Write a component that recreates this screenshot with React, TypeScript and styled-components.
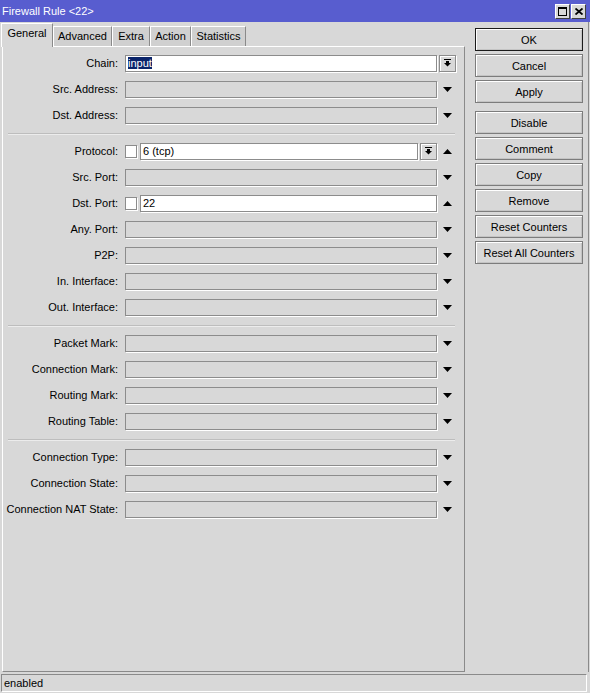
import React from 'react';
import styled, { createGlobalStyle } from 'styled-components';

const GlobalStyle = createGlobalStyle`
    html, body {
        margin: 0;
        padding: 0;
        background: #d8d8d8;
    }
    body {
        font-family: "Liberation Sans", Arial, sans-serif;
        font-size: 11px;
        color: #000;
    }
`;

const Window = styled.div`
    width: 590px;
    height: 693px;
    display: flex;
    flex-direction: column;
    background: #d8d8d8;
    box-sizing: border-box;
    overflow: hidden;
`;

const TitleBar = styled.div`
    height: 22px;
    flex: none;
    display: flex;
    align-items: center;
    justify-content: space-between;
    background: #585dcf;
    color: #fff;
    padding: 0 4px 0 2px;
    box-sizing: border-box;
`;

const TitleButtons = styled.div`
    display: flex;
    gap: 1px;
    margin-top: 1px;
`;

const TitleButton = styled.div`
    width: 15px;
    height: 15px;
    box-sizing: border-box;
    background: #d8d8d8;
    border: 1px solid;
    border-color: #fff #404040 #404040 #fff;
    display: flex;
    align-items: center;
    justify-content: center;
`;

const Main = styled.div`
    flex: 1;
    display: flex;
    padding-left: 2px;
    border-right: 1px solid #8a8a8a;
    margin-right: 1px;
    min-height: 0;
`;

const LeftColumn = styled.div`
    width: 463px;
    display: flex;
    flex-direction: column;
`;

const TabRow = styled.div`
    height: 24px;
    flex: none;
    display: flex;
    align-items: flex-end;
`;

const Tab = styled.div<{ $active?: boolean; $width: number }>`
    position: relative;
    z-index: ${p => (p.$active ? 2 : 1)};
    box-sizing: border-box;
    width: ${p => p.$width}px;
    height: ${p => (p.$active ? 24 : 20)}px;
    margin-left: ${p => (p.$active ? -1 : 0)}px;
    margin-bottom: ${p => (p.$active ? -1 : 0)}px;
    padding-top: ${p => (p.$active ? 3 : 3)}px;
    text-align: center;
    background: ${p => (p.$active ? '#d8d8d8' : '#d0d0d0')};
    border-top: 1px solid #fff;
    border-left: 1px solid #fff;
    border-right: 1px solid #8a8a8a;
    white-space: nowrap;
`;

const Panel = styled.div`
    flex: 1;
    box-sizing: border-box;
    border: 1px solid;
    border-color: #fff #8a8a8a #8a8a8a #fff;
    padding-top: 3px;
    display: flex;
    flex-direction: column;
`;

const Row = styled.div`
    height: 26px;
    display: flex;
    align-items: center;
`;

const Label = styled.div`
    width: 115px;
    margin-right: 7px;
    text-align: right;
    white-space: nowrap;
`;

const Field = styled.div`
    width: 312px;
    display: flex;
    align-items: center;
    gap: 3px;
`;

const TextBox = styled.div<{ $enabled?: boolean }>`
    flex: 1;
    height: 17px;
    box-sizing: border-box;
    border: 1px solid #8c8c8c;
    box-shadow: 1px 1px 0 #fff;
    background: ${p => (p.$enabled ? '#fff' : '#d8d8d8')};
    padding: 0 2px;
    line-height: 15px;
    white-space: nowrap;
    overflow: hidden;
`;

const Selected = styled.span`
    background: #0a246a;
    color: #fff;
`;

const CheckBox = styled.div`
    width: 12px;
    height: 13px;
    box-sizing: border-box;
    border: 1px solid #8c8c8c;
    box-shadow: 1px 1px 0 #fff;
    background: #fff;
`;

const DropButton = styled.div`
    width: 17px;
    height: 17px;
    margin-left: -1px;
    box-sizing: border-box;
    border: 1px solid #8c8c8c;
    box-shadow: inset 1px 1px 0 #fff, 1px 1px 0 #fff;
    display: flex;
    align-items: center;
    justify-content: center;
    background: #d8d8d8;
`;

const Trail = styled.div`
    width: 20px;
    display: flex;
    align-items: center;
    justify-content: center;
`;

const TrailButton = styled(Trail)`
    justify-content: flex-start;
    padding-left: 3px;
    box-sizing: border-box;
`;

const Separator = styled.div`
    height: 10px;
    display: flex;
    align-items: center;
    margin: 0 9px 0 5px;
    &::after {
        content: '';
        flex: 1;
        height: 1px;
        background: #bdbdbd;
        box-shadow: 0 1px 0 #ececec;
    }
`;

const ButtonColumn = styled.div`
    margin-left: 10px;
    padding-top: 6px;
    display: flex;
    flex-direction: column;
    gap: 3px;
`;

const Button = styled.div<{ $default?: boolean; $gapBefore?: boolean }>`
    width: 108px;
    height: 23px;
    box-sizing: border-box;
    border: 1px solid ${p => (p.$default ? '#1a1a1a' : '#7c7c7c')};
    box-shadow: inset 1px 1px 0 #fff, inset -1px -1px 0 #c4c4c4;
    display: flex;
    align-items: center;
    justify-content: center;
    margin-top: ${p => (p.$gapBefore ? 5 : 0)}px;
    white-space: nowrap;
`;

const StatusBar = styled.div`
    height: 18px;
    flex: none;
    margin: 2px 3px 1px 1px;
    box-sizing: border-box;
    border: 1px solid;
    border-color: #8a8a8a #fff #fff #8a8a8a;
    padding-left: 2px;
    line-height: 16px;
`;

const ArrowDown = () => (
    <svg width="9" height="5" viewBox="0 0 9 5">
        <polygon points="0,0 9,0 4.5,5" fill="#000" />
    </svg>
);

const ArrowUp = () => (
    <svg width="9" height="5" viewBox="0 0 9 5">
        <polygon points="4.5,0 9,5 0,5" fill="#000" />
    </svg>
);

const DropIcon = () => (
    <svg width="7" height="8" viewBox="0 0 7 8">
        <rect x="0" y="0" width="7" height="1" fill="#000" />
        <rect x="2" y="2" width="3" height="2" fill="#000" />
        <polygon points="0,4 7,4 3.5,7.5" fill="#000" />
    </svg>
);

type TRow = {
    label: string;
    trail?: 'down' | 'up' | 'button';
    children?: React.ReactNode;
};

const FormRow = ({ label, trail = 'down', children }: TRow) => (
    <Row>
        <Label>{label}</Label>
        <Field>{children || <TextBox />}</Field>
        {trail === 'button' ? (
            <TrailButton>
                <DropButton>
                    <DropIcon />
                </DropButton>
            </TrailButton>
        ) : (
            <Trail>{trail === 'up' ? <ArrowUp /> : <ArrowDown />}</Trail>
        )}
    </Row>
);

const tabs = [
    { name: 'General', width: 52 },
    { name: 'Advanced', width: 59 },
    { name: 'Extra', width: 38 },
    { name: 'Action', width: 41 },
    { name: 'Statistics', width: 55 },
];

const App = () => (
    <Window>
        <GlobalStyle />
        <TitleBar>
            <span>Firewall Rule &lt;22&gt;</span>
            <TitleButtons>
                <TitleButton>
                    <svg width="9" height="9" viewBox="0 0 9 9">
                        <rect x="0.5" y="0.5" width="8" height="8" fill="none" stroke="#000" />
                        <rect x="0" y="0" width="9" height="2" fill="#000" />
                    </svg>
                </TitleButton>
                <TitleButton>
                    <svg width="8" height="7" viewBox="0 0 8 7">
                        <path d="M0.5 0.5 L7.5 6.5 M7.5 0.5 L0.5 6.5" stroke="#000" strokeWidth="1.8" />
                    </svg>
                </TitleButton>
            </TitleButtons>
        </TitleBar>
        <Main>
            <LeftColumn>
                <TabRow>
                    {tabs.map((t, i) => (
                        <Tab key={t.name} $active={i === 0} $width={t.width}>{t.name}</Tab>
                    ))}
                </TabRow>
                <Panel>
                    <FormRow label="Chain:" trail="button">
                        <TextBox $enabled><Selected>input</Selected></TextBox>
                    </FormRow>
                    <FormRow label="Src. Address:" />
                    <FormRow label="Dst. Address:" />
                    <Separator />
                    <FormRow label="Protocol:" trail="up">
                        <CheckBox />
                        <TextBox $enabled>6 (tcp)</TextBox>
                        <DropButton>
                            <DropIcon />
                        </DropButton>
                    </FormRow>
                    <FormRow label="Src. Port:" />
                    <FormRow label="Dst. Port:" trail="up">
                        <CheckBox />
                        <TextBox $enabled>22</TextBox>
                    </FormRow>
                    <FormRow label="Any. Port:" />
                    <FormRow label="P2P:" />
                    <FormRow label="In. Interface:" />
                    <FormRow label="Out. Interface:" />
                    <Separator />
                    <FormRow label="Packet Mark:" />
                    <FormRow label="Connection Mark:" />
                    <FormRow label="Routing Mark:" />
                    <FormRow label="Routing Table:" />
                    <Separator />
                    <FormRow label="Connection Type:" />
                    <FormRow label="Connection State:" />
                    <FormRow label="Connection NAT State:" />
                </Panel>
            </LeftColumn>
            <ButtonColumn>
                <Button $default>OK</Button>
                <Button>Cancel</Button>
                <Button>Apply</Button>
                <Button $gapBefore>Disable</Button>
                <Button>Comment</Button>
                <Button>Copy</Button>
                <Button>Remove</Button>
                <Button>Reset Counters</Button>
                <Button>Reset All Counters</Button>
            </ButtonColumn>
        </Main>
        <StatusBar>enabled</StatusBar>
    </Window>
);

export default App;
